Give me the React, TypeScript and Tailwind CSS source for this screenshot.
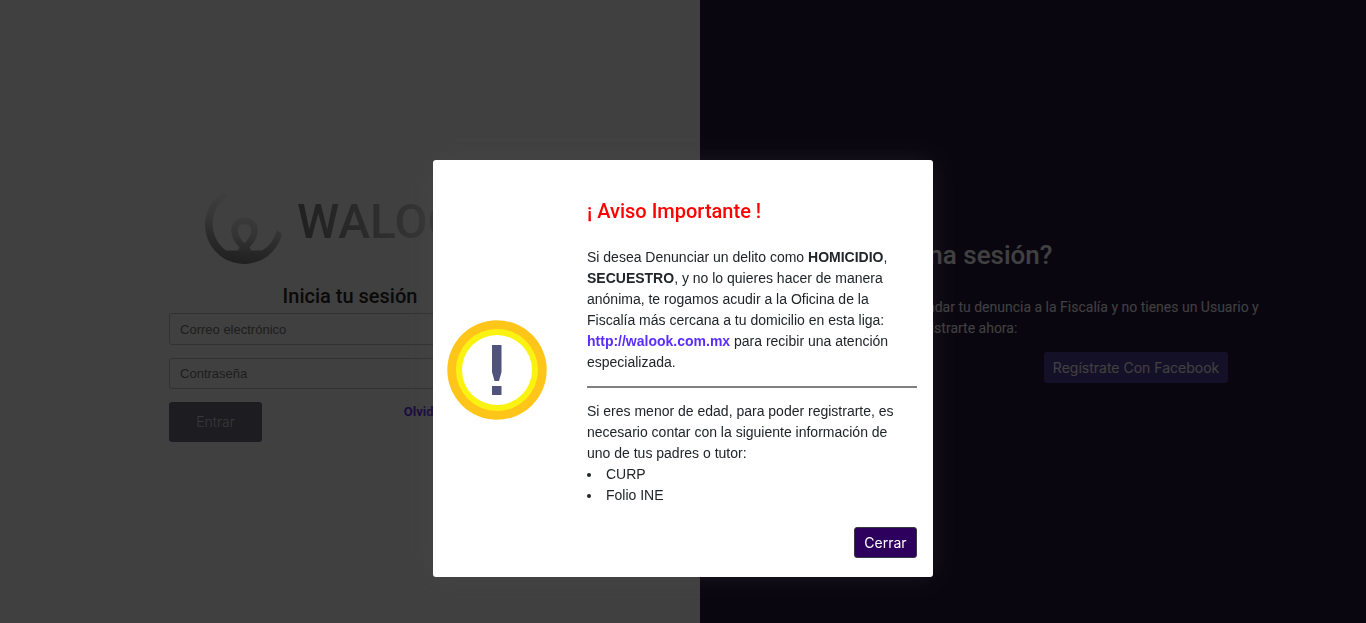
import { useState } from "react";

function WalookLogo() {
  return (
    <div className="flex h-[86px] items-start gap-[13px] pl-[35px]">
      <svg viewBox="0 0 80 80" className="h-20 w-20 shrink-0" fill="none" aria-hidden="true">
        <defs>
          <linearGradient id="ring" x1="30" y1="80" x2="44" y2="8" gradientUnits="userSpaceOnUse">
            <stop offset="0" stopColor="#808080" />
            <stop offset="0.25" stopColor="#a0a0a0" />
            <stop offset="0.6" stopColor="#dcdcdc" />
            <stop offset="1" stopColor="#ffffff" />
          </linearGradient>
          <linearGradient id="loop" x1="40" y1="68" x2="40" y2="34" gradientUnits="userSpaceOnUse">
            <stop offset="0" stopColor="#a0a0a0" />
            <stop offset="0.5" stopColor="#d0d0d0" />
            <stop offset="1" stopColor="#e6e6e6" />
          </linearGradient>
        </defs>
        <path
          d="M20 7.500A39 39 0 1 0 78 50L73 46A33 33 0 0 1 58 66.500L22 66.500A33 33 0 0 1 24 12Z"
          fill="url(#ring)"
        />
        <path
          d="M45 68C36 60 30.500 54 30.500 46C30.500 34 50.500 34 50.500 46C50.500 54 45 60 36 68"
          stroke="url(#loop)"
          strokeWidth="6.500"
        />
      </svg>
      <span className="mt-2 bg-linear-to-r from-[#808080] to-[#ffffff] bg-clip-text font-[Roboto] text-[48px]/[60px] font-medium text-transparent">
        WALOOK
      </span>
    </div>
  );
}

function WarningIcon() {
  return (
    <svg viewBox="0 0 100 100" className="h-[100px] w-[100px]" role="img" aria-label="Aviso">
      <circle cx="50" cy="50" r="49.7" fill="#ffc519" />
      <circle cx="50" cy="50" r="41" fill="#faf312" />
      <circle cx="50" cy="50" r="35" fill="#ffffff" />
      <path d="M45 25H54.500V52L52 61H47.500L45 52Z" fill="#50537c" />
      <path d="M45 66H54.500V75H45Z" fill="#50537c" />
    </svg>
  );
}

function LoginPanel() {
  const field =
    "block w-full rounded-[3px] border border-[#c4c4cc] bg-white px-[10px] text-[13px] text-[#333333] placeholder:text-[#777777]";
  return (
    <section className="flex w-[51.25%] flex-col items-center bg-white pt-[184px]">
      <form className="w-full max-w-[362px]" onSubmit={(e) => e.preventDefault()}>
        <WalookLogo />
        <h2 className="mt-3 text-center font-[Roboto] text-xl/[28px] font-medium text-[#282828]">
          Inicia tu sesión
        </h2>
        <input type="email" aria-label="Correo electrónico" placeholder="Correo electrónico" className={`${field} mt-[3px] h-8`} />
        <input type="password" aria-label="Contraseña" placeholder="Contraseña" className={`${field} mt-[13px] h-[31px]`} />
        <div className="mt-[13px] flex items-start justify-between pr-1">
          <button type="submit" className="h-10 w-[93px] rounded-[3px] bg-[#747080] font-[Inter] text-sm font-light text-[#dddddd]">
            Entrar
          </button>
          <a href="#recuperar" className="font-[Roboto] text-[13px]/[20px] font-bold text-[#6a2cff]">
            Olvidé mi contraseña
          </a>
        </div>
      </form>
    </section>
  );
}

function RegisterPanel() {
  return (
    <section className="flex flex-1 flex-col bg-[#24183f] pt-[238px] pl-[84px] font-[Roboto] text-white">
      <h2 className="text-[26px]/[34px] font-medium">¿No tienes una sesión?</h2>
      <p className="mt-[25px] text-sm/[21px]">
        Si lo que deseas es mandar tu denuncia a la Fiscalía y no tienes un Usuario y
        <br />
        Contraseña, puedes registrarte ahora:
      </p>
      <button type="button" className="mt-[13px] ml-[260px] h-[31px] w-[184px] rounded-[3px] bg-[#50409c] font-[Inter] text-sm text-white">
        Regístrate Con Facebook
      </button>
    </section>
  );
}

export default function App() {
  const [open, setOpen] = useState(true);
  return (
    <main className="flex min-h-screen font-['Liberation_Sans',Arial,sans-serif]">
      <LoginPanel />
      <RegisterPanel />
      {open && (
        <div className="fixed inset-0 flex items-start justify-center bg-black/75 pt-40">
          <div
            role="dialog"
            aria-modal="true"
            aria-labelledby="aviso"
            className="flex w-full max-w-[500px] items-center rounded-[3px] bg-white px-[14px] shadow-[0_0_26px_rgba(80,80,80,0.25)]"
          >
            <div className="w-[140px] shrink-0 pt-[3px]">
              <WarningIcon />
            </div>
            <div className="flex-1 pt-[38px] pr-[2px] pb-[19px] text-sm/[21px] text-[#212529]">
              <h3 id="aviso" className="font-[Roboto] text-xl/[26px] font-medium text-[#ff0000]">
                ¡ Aviso Importante !
              </h3>
              <p className="mt-[23px] pr-3">
                Si desea Denunciar un delito como <b>HOMICIDIO</b>, <b>SECUESTRO</b>, y no lo quieres hacer de manera
                anónima, te rogamos acudir a la Oficina de la Fiscalía más cercana a tu domicilio en esta liga:{" "}
                <a href="http://walook.com.mx" className="font-bold text-[#5a2cff]">
                  http://walook.com.mx
                </a>{" "}
                para recibir una atención especializada.
              </p>
              <hr className="my-[13px] border-t-2 border-[#808080]" />
              <p className="pr-3">
                Si eres menor de edad, para poder registrarte, es necesario contar con la siguiente información de uno
                de tus padres o tutor:
              </p>
              <ul className="list-inside list-disc">
                <li>CURP</li>
                <li>Folio INE</li>
              </ul>
              <div className="mt-[21px] flex justify-end">
                <button
                  type="button"
                  onClick={() => setOpen(false)}
                  className="h-[31px] w-[63px] rounded-[3px] border border-[#343a40] bg-[#2c005c] font-[Inter] text-sm text-white"
                >
                  Cerrar
                </button>
              </div>
            </div>
          </div>
        </div>
      )}
    </main>
  );
}
